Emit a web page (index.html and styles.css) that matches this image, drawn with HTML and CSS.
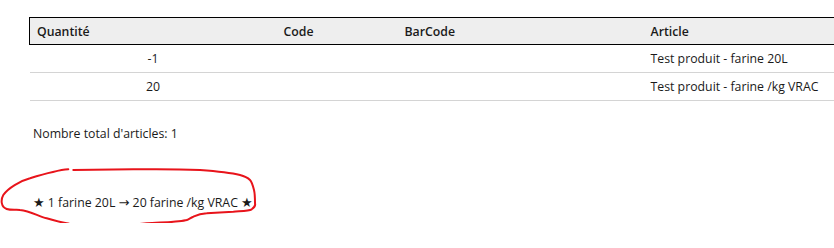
FILE: index.html
```html
<!DOCTYPE html>
<html lang="fr">
<head>
<meta charset="utf-8">
<title>Articles</title>
<link rel="stylesheet" href="styles.css">
</head>
<body>
<main class="page">
  <table class="items">
    <colgroup>
      <col class="c-qty">
      <col class="c-code">
      <col class="c-bar">
      <col class="c-art">
    </colgroup>
    <thead>
      <tr>
        <th>Quantité</th>
        <th>Code</th>
        <th>BarCode</th>
        <th>Article</th>
      </tr>
    </thead>
    <tbody>
      <tr>
        <td class="qty">-1</td>
        <td></td>
        <td></td>
        <td>Test produit - farine 20L</td>
      </tr>
      <tr>
        <td class="qty">20</td>
        <td></td>
        <td></td>
        <td>Test produit - farine /kg VRAC</td>
      </tr>
    </tbody>
  </table>

  <p class="total">Nombre total d'articles: 1</p>

  <div class="note">
    <p class="note-text"><span class="sym">★</span> 1 farine 20L <span class="sym">→</span> 20 farine /kg VRAC <span class="sym">★</span></p>
    <svg class="scribble" width="260" height="66" viewBox="0 166 260 66" aria-hidden="true">
      <path d="M68.3 169.3 C58 170 44 174 30 178.3 C20 181 8 188 3.3 195 C0.5 200 1 207 6.7 209 C11 210.5 16 209.5 20 210 C30 211 38 216 46.7 218.3 C56 221 62 222.5 66.7 223.3 C76 225.5 85 226.7 93.3 226.7 C103 227 112 226.5 120 226 C130 225 139 224 146.7 223.3 C156 222.5 166 222.5 173.3 221.7 C180 221 184 221 186.7 220 C189 219 191 217.5 193.3 216.7 C198 214.5 202 213.5 206.7 213.3 C216 212.5 225 212 233.3 211.7 C242 211 249 211 251.7 209.3 C255 207 255.5 205 255 203.3 C255 198 255 194 254 190 C253 186 252 182 250 180 C247 177 244 176 240 175 C228 172 214 171 200 170 C178 169 155 169 133.3 169.3 C110 169.5 90 169.8 73.3 170"
        fill="none" stroke="#e8141b" stroke-width="2" stroke-linecap="round" stroke-linejoin="round"/>
    </svg>
  </div>
</main>
</body>
</html>
```

FILE: styles.css
```css
html, body {
  margin: 0;
  padding: 0;
  overflow: hidden;
  background: #ffffff;
}

body {
  font-family: "Open Sans", "Noto Sans", sans-serif;
  font-size: 12.3px;
  color: #1a1a1a;
}

.page {
  padding: 17px 0 0 29px;
}

.items {
  border-collapse: collapse;
  width: 805px;
  table-layout: fixed;
}

.c-qty { width: 247px; }
.c-code { width: 121px; }
.c-bar { width: 246px; }
.c-art { width: auto; }

.items th {
  background: #eeeeee;
  border-top: 1px solid #000000;
  border-bottom: 1px solid #000000;
  text-align: left;
  font-weight: 600;
  height: 27px;
  padding: 0 7px;
  box-sizing: border-box;
}

.items th:first-child {
  border-left: 1px solid #000000;
}

.items td {
  height: 28px;
  padding: 0 7px;
  border-bottom: 1px solid #d4d4d4;
  box-sizing: border-box;
}

.items td.qty {
  text-align: center;
}

.total {
  margin: 24px 0 0 4px;
  line-height: 18px;
}

.note {
  position: relative;
  margin: 0 0 0 -29px;
  height: 80px;
}

.note-text {
  margin: 0;
  padding: 51px 0 0 33px;
  line-height: 18px;
}

.sym {
  font-family: "DejaVu Sans", sans-serif;
  font-size: 13px;
}

.scribble {
  position: absolute;
  left: 0;
  top: 23px;
}
```
